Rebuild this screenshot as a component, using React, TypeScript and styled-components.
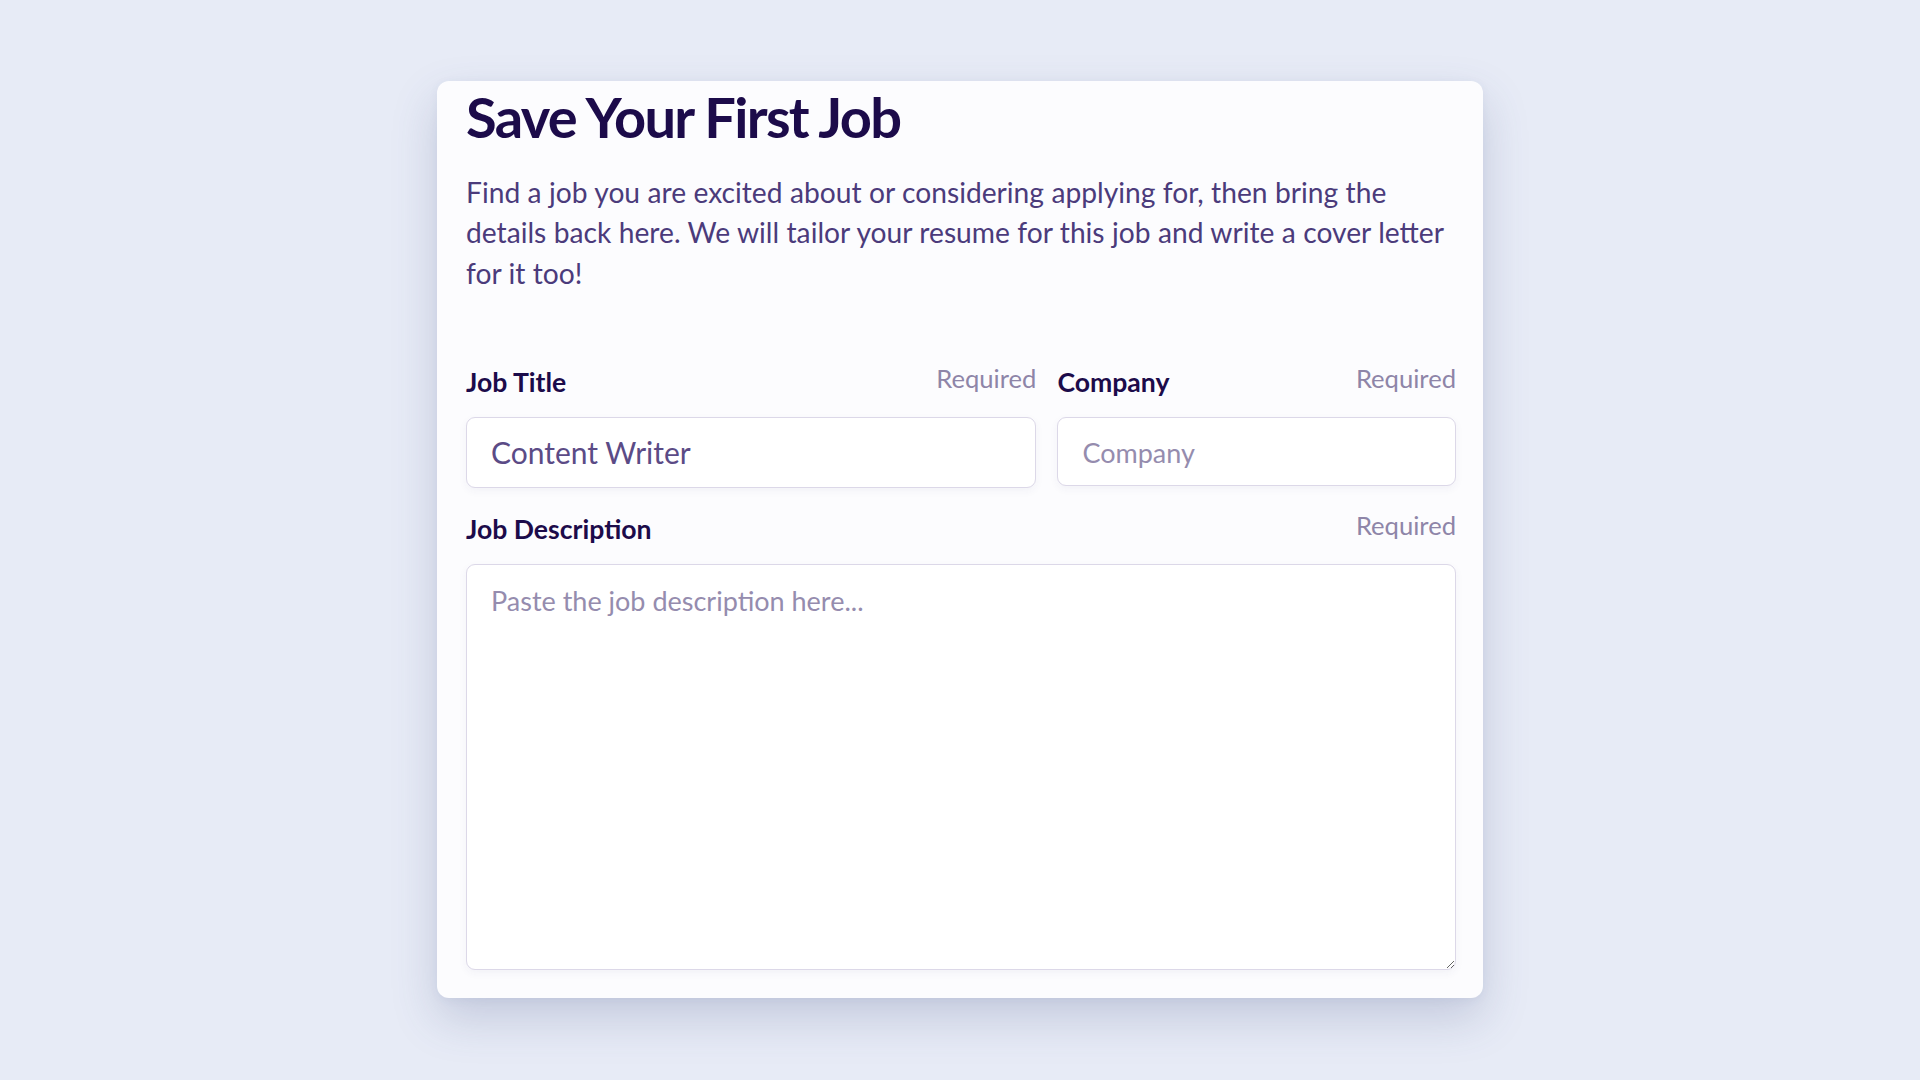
import React from "react";
import styled, { createGlobalStyle } from "styled-components";

const GlobalStyle = createGlobalStyle`
  html, body {
    margin: 0;
    padding: 0;
    background: #e7ebf6;
  }
  body {
    font-family: Lato, "Noto Sans", sans-serif;
    -webkit-font-smoothing: antialiased;
  }
  * { box-sizing: border-box; }
`;

const Page = styled.main`
  min-height: 1080px;
  display: flex;
  justify-content: center;
  align-items: flex-start;
  padding-top: 81px;
`;

const Card = styled.section`
  width: 1046px;
  background: #fcfcfe;
  border-radius: 12px;
  padding: 2px 27px 28px 29px;
  box-shadow: 0 20px 46px rgba(70, 80, 130, 0.22), 0 2px 10px rgba(70, 80, 130, 0.06);
`;

const Title = styled.h1`
  margin: 0;
  font-size: 56px;
  line-height: 1.2;
  font-weight: 700;
  letter-spacing: -0.03em;
  color: #1c0b4a;
`;

const Intro = styled.p`
  margin: 21.5px 0 0;
  font-size: 28.2px;
  line-height: 40.4px;
  word-spacing: 0.2px;
  color: #4b3b7b;
`;

const Form = styled.form`
  margin-top: 70px;
  display: flex;
  flex-direction: column;
  gap: 22px;
`;

const Row = styled.div`
  display: grid;
  grid-template-columns: 571fr 399fr;
  gap: 21px;
`;

const Field = styled.div`
  display: flex;
  flex-direction: column;
  gap: 16px;
  min-width: 0;
`;

const FieldHead = styled.div`
  display: flex;
  justify-content: space-between;
  align-items: flex-start;
`;

const Label = styled.label`
  font-size: 26.6px;
  line-height: 38px;
  font-weight: 700;
  color: #1c0b4a;
`;

const Hint = styled.span`
  font-size: 25.6px;
  line-height: 30px;
  color: #8e85a8;
`;

const fieldBase = `
  width: 100%;
  font-family: Lato, "Noto Sans", sans-serif;
  color: #5b4b86;
  background: #ffffff;
  border: 1.5px solid #dcd8e8;
  border-radius: 9px;
  box-shadow: 0 3px 8px rgba(60, 50, 110, 0.05);
  outline: none;
  &::placeholder {
    color: #958cae;
    font-size: 27px;
  }
`;

const TextInput = styled.input<{ $h?: number }>`
  ${fieldBase}
  font-size: 30px;
  height: ${(p) => p.$h ?? 71}px;
  padding: 0 24px;
`;

const TextArea = styled.textarea`
  ${fieldBase}
  font-size: 27px;
  height: 406px;
  padding: 18px 24px;
  line-height: 1.3;
  resize: vertical;
`;

export default function App() {
  return (
    <>
      <GlobalStyle />
      <Page>
        <Card>
          <Title>Save Your First Job</Title>
          <Intro>
            Find a job you are excited about or considering applying for, then bring the
            details back here. We will tailor your resume for this job and write a cover letter
            for it too!
          </Intro>
          <Form onSubmit={(e) => e.preventDefault()}>
            <Row>
              <Field>
                <FieldHead>
                  <Label htmlFor="job-title">Job Title</Label>
                  <Hint>Required</Hint>
                </FieldHead>
                <TextInput id="job-title" defaultValue="Content Writer" />
              </Field>
              <Field>
                <FieldHead>
                  <Label htmlFor="company">Company</Label>
                  <Hint>Required</Hint>
                </FieldHead>
                <TextInput id="company" placeholder="Company" $h={69} />
              </Field>
            </Row>
            <Field>
              <FieldHead>
                <Label htmlFor="job-description">Job Description</Label>
                <Hint>Required</Hint>
              </FieldHead>
              <TextArea id="job-description" placeholder="Paste the job description here..." />
            </Field>
          </Form>
        </Card>
      </Page>
    </>
  );
}
